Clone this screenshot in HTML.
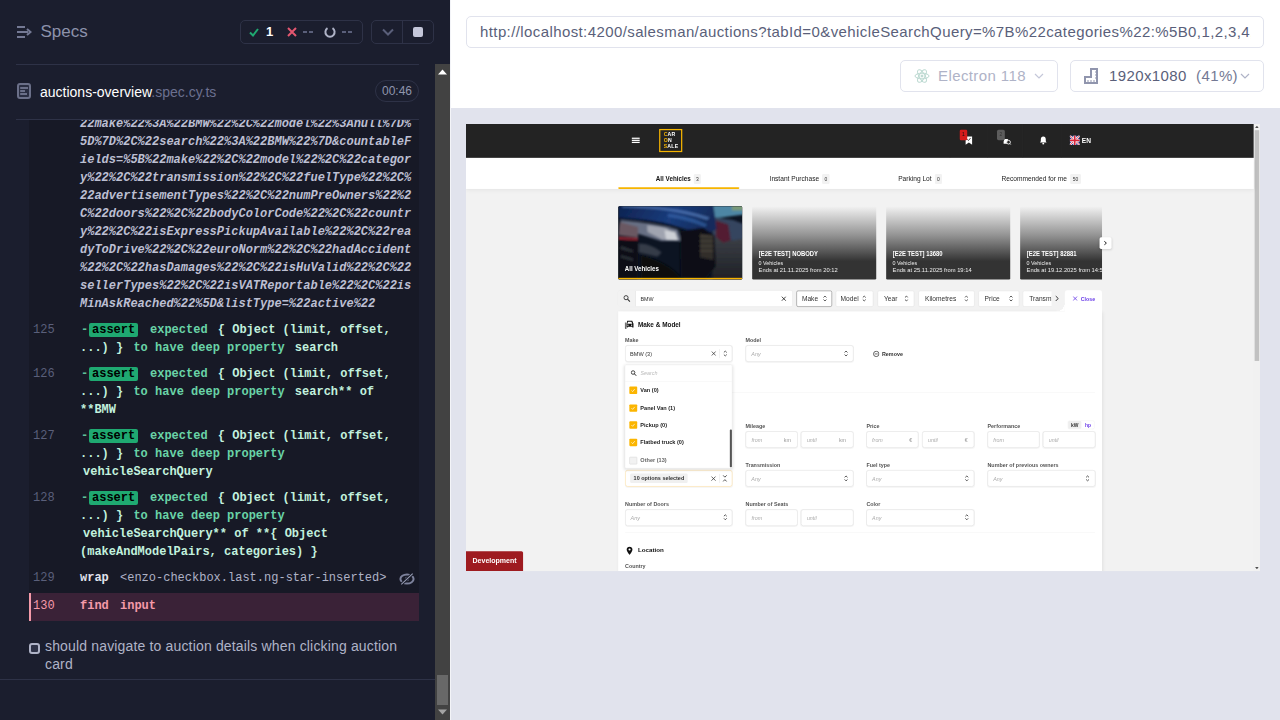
<!DOCTYPE html>
<html><head><meta charset="utf-8">
<style>
*{box-sizing:border-box;margin:0;padding:0}
html,body{width:1280px;height:720px;overflow:hidden;background:#e1e3ed;font-family:"Liberation Sans",sans-serif}
.a{position:absolute}
#rep{left:0;top:0;width:450px;height:720px;background:#1b1e2e;overflow:hidden}
.hl{height:1px;background:#2e3247}
.mono{font-family:"Liberation Mono",monospace;font-size:12px;line-height:18px;white-space:pre}
.num{color:#5a5f7a;font-weight:normal}
.url{color:#bcbfd2;font-weight:bold;font-style:italic}
.g{color:#69d3a7;font-weight:bold}
.w{color:#c2f1de;font-weight:bold}
.badge{background:#1fa971;color:#000;font-weight:bold;border-radius:3px}
</style></head><body>
<div id="rep" class="a">
  <!-- header -->
  <svg class="a" style="left:17px;top:26px" width="15" height="13" viewBox="0 0 15 13">
    <path d="M0 1h8M0 6h11M0 11h8" stroke="#747994" stroke-width="2"/>
    <path d="M10 3l3.5 3L10 9" stroke="#747994" stroke-width="2" fill="none"/>
  </svg>
  <div class="a" style="left:40.5px;top:20.5px;font-size:17px;line-height:22px;color:#8d92ab">Specs</div>
  <div class="a" style="left:240px;top:20px;width:123px;height:24px;border:1px solid #2e3247;border-radius:5px"></div>
  <svg class="a" style="left:249px;top:28px" width="10" height="9" viewBox="0 0 10 9"><path d="M1 4.5l3 3L9 1" stroke="#1fa971" stroke-width="2" fill="none"/></svg>
  <div class="a" style="left:266px;top:24px;font-size:13px;line-height:16px;font-weight:bold;color:#fff">1</div>
  <svg class="a" style="left:287px;top:27px" width="10" height="10" viewBox="0 0 10 10"><path d="M1 1l8 8M9 1l-8 8" stroke="#e45770" stroke-width="2"/></svg>
  <div class="a" style="left:303px;top:31px;width:10px;height:2px;border-left:4px solid #5a5f7a;border-right:4px solid #5a5f7a"></div>
  <svg class="a" style="left:324px;top:26px" width="12" height="12" viewBox="0 0 12 12"><path d="M3.5 2.2A4.6 4.6 0 1 0 8.5 2.2" stroke="#afb3c7" stroke-width="2" fill="none"/></svg>
  <div class="a" style="left:342px;top:31px;width:10px;height:2px;border-left:4px solid #5a5f7a;border-right:4px solid #5a5f7a"></div>
  <div class="a" style="left:371px;top:20px;width:63px;height:24px;border:1px solid #2e3247;border-radius:5px"></div>
  <div class="a" style="left:402px;top:20px;width:1px;height:24px;background:#2e3247"></div>
  <svg class="a" style="left:382px;top:28px" width="12" height="8" viewBox="0 0 12 8"><path d="M1 1.5l5 5 5-5" stroke="#5a5f7a" stroke-width="2" fill="none"/></svg>
  <div class="a" style="left:413px;top:27px;width:10px;height:10px;background:#c4c7d9;border-radius:2px"></div>
  <div class="a hl" style="left:16px;top:64px;width:403px"></div>
  <!-- spec row -->
  <svg class="a" style="left:17px;top:83px" width="14" height="16" viewBox="0 0 14 16"><rect x="1" y="1" width="12" height="14" rx="2" fill="#2a2e42" stroke="#6b7089" stroke-width="2"/><path d="M3.2 5h7.8M3.2 8h4.8M3.2 11h6.8" stroke="#6b7089" stroke-width="1.8"/></svg>
  <div class="a" style="left:40px;top:84px;font-size:14px;line-height:16px;color:#fff;white-space:pre">auctions-overview<span style="color:#6b7090">.spec.cy.ts</span></div>
  <div class="a" style="left:375px;top:80px;width:44px;height:22px;border:1px solid #2e3247;border-radius:11px"></div>
  <div class="a" style="left:382px;top:84px;font-size:12px;line-height:14px;color:#9095ad">00:46</div>
  <div class="a hl" style="left:16px;top:119px;width:403px"></div>

  <!-- command log -->
  <div class="a" style="left:29px;top:120px;width:390px;height:501px;background:#171926;overflow:hidden">
    <div class="a mono url" style="left:51px;top:-5px">22make%22%3A%22BMW%22%2C%22model%22%3Anull%7D%
5D%7D%2C%22search%22%3A%22BMW%22%7D&amp;countableF
ields=%5B%22make%22%2C%22model%22%2C%22categor
y%22%2C%22transmission%22%2C%22fuelType%22%2C%
22advertisementTypes%22%2C%22numPreOwners%22%2
C%22doors%22%2C%22bodyColorCode%22%2C%22countr
y%22%2C%22isExpressPickupAvailable%22%2C%22rea
dyToDrive%22%2C%22euroNorm%22%2C%22hadAccident
%22%2C%22hasDamages%22%2C%22isHuValid%22%2C%22
sellerTypes%22%2C%22isVATReportable%22%2C%22is
MinAskReached%22%5D&amp;listType=%22active%22</div>
<div class="a mono" style="left:4px;top:201px;color:#5a5f7a">125</div><div class="a mono g" style="left:52px;top:201px;color:#5fbf97">-</div><div class="a" style="left:60px;top:203px;width:49px;height:14px;background:#1fa971;border-radius:2px"></div><div class="a mono" style="left:63px;top:201px;color:#000;font-weight:bold">assert</div><div class="a mono" style="left:121px;top:201px"><span class="g">expected</span> <span class="w" style="padding-left:3px">{ Object (limit, offset,</span></div><div class="a mono" style="left:51px;top:219px"><span class="w">...) }</span> <span class="g" style="padding-left:3px">to have deep property</span> <span class="w" style="padding-left:3px">search</span></div><div class="a mono" style="left:4px;top:245px;color:#5a5f7a">126</div><div class="a mono g" style="left:52px;top:245px;color:#5fbf97">-</div><div class="a" style="left:60px;top:247px;width:49px;height:14px;background:#1fa971;border-radius:2px"></div><div class="a mono" style="left:63px;top:245px;color:#000;font-weight:bold">assert</div><div class="a mono" style="left:121px;top:245px"><span class="g">expected</span> <span class="w" style="padding-left:3px">{ Object (limit, offset,</span></div><div class="a mono" style="left:51px;top:263px"><span class="w">...) }</span> <span class="g" style="padding-left:3px">to have deep property</span> <span class="w" style="padding-left:3px">search** of</span></div><div class="a mono" style="left:51px;top:281px"><span class="w">**BMW</span></div><div class="a mono" style="left:4px;top:307px;color:#5a5f7a">127</div><div class="a mono g" style="left:52px;top:307px;color:#5fbf97">-</div><div class="a" style="left:60px;top:309px;width:49px;height:14px;background:#1fa971;border-radius:2px"></div><div class="a mono" style="left:63px;top:307px;color:#000;font-weight:bold">assert</div><div class="a mono" style="left:121px;top:307px"><span class="g">expected</span> <span class="w" style="padding-left:3px">{ Object (limit, offset,</span></div><div class="a mono" style="left:51px;top:325px"><span class="w">...) }</span> <span class="g" style="padding-left:3px">to have deep property</span></div><div class="a mono" style="left:54px;top:343px"><span class="w">vehicleSearchQuery</span></div><div class="a mono" style="left:4px;top:369px;color:#5a5f7a">128</div><div class="a mono g" style="left:52px;top:369px;color:#5fbf97">-</div><div class="a" style="left:60px;top:371px;width:49px;height:14px;background:#1fa971;border-radius:2px"></div><div class="a mono" style="left:63px;top:369px;color:#000;font-weight:bold">assert</div><div class="a mono" style="left:121px;top:369px"><span class="g">expected</span> <span class="w" style="padding-left:3px">{ Object (limit, offset,</span></div><div class="a mono" style="left:51px;top:387px"><span class="w">...) }</span> <span class="g" style="padding-left:3px">to have deep property</span></div><div class="a mono" style="left:54px;top:405px"><span class="w">vehicleSearchQuery** of **{ Object</span></div><div class="a mono" style="left:51px;top:423px"><span class="w">(makeAndModelPairs, categories) }</span></div><div class="a mono" style="left:4px;top:449px;color:#5a5f7a">129</div><div class="a mono" style="left:51px;top:449px"><span style="color:#e1e3ed;font-weight:bold">wrap</span></div><div class="a mono" style="left:91px;top:449px"><span style="color:#afb3c7">&lt;enzo-checkbox.last.ng-star-inserted&gt;</span></div><svg class="a" style="left:370px;top:453px" width="16" height="12" viewBox="0 0 16 12"><ellipse cx="8" cy="6" rx="6.6" ry="4.6" fill="none" stroke="#7d829c" stroke-width="2"/><circle cx="8" cy="6" r="2.2" fill="#5f647e"/><path d="M2.3 11.3L13.7 0.7" stroke="#171926" stroke-width="3"/><path d="M2.3 11.3L13.7 0.7" stroke="#9a9fb6" stroke-width="1.1"/></svg><div class="a" style="left:0px;top:473px;width:390px;height:28px;background:#3a2237;border-left:2px solid #f59aa9"></div><div class="a mono" style="left:4px;top:477px;color:#f59aa9">130</div><div class="a mono" style="left:51px;top:477px"><span style="color:#f59aa9;font-weight:bold">find</span></div><div class="a mono" style="left:91px;top:477px"><span style="color:#f59aa9;font-weight:bold">input</span></div>
  </div>
  
  <div class="a" style="left:29px;top:643px;width:10.5px;height:10.5px;border:2px solid #afb3c7;border-radius:3px;background:#2e3247"></div>
  <div class="a" style="left:45px;top:637px;width:380px;font-size:14px;line-height:18px;letter-spacing:0.16px;color:#afb3c7">should navigate to auction details when clicking auction<br>card</div>
  <div class="a hl" style="left:0px;top:679px;width:435px"></div>
<div class="a" style="left:435px;top:64px;width:15px;height:656px;background:#424242"></div>
  <div class="a" style="left:437px;top:675px;width:11px;height:30px;background:#686868"></div>
  <svg class="a" style="left:438px;top:69px" width="9" height="6" viewBox="0 0 9 6"><path d="M0 5.5L4.5 0.5 9 5.5z" fill="#fff"/></svg>
  <svg class="a" style="left:438px;top:709px" width="9" height="6" viewBox="0 0 9 6"><path d="M0 0.5L4.5 5.5 9 0.5z" fill="#a3a3a3"/></svg>
</div>

<!--APP--><div id="app" class="a" style="left:466px;top:124px;width:1920px;height:1081px;transform:scale(0.413542);transform-origin:0 0;background:#f2f2f2;overflow:hidden">
 <div class="a" style="left:0;top:0;width:1905px;height:82px;background:#232323"></div>
 <!-- hamburger -->
 <div class="a" style="left:401px;top:33px;width:19px;height:3px;background:#fff"></div>
 <div class="a" style="left:401px;top:38px;width:19px;height:3px;background:#fff"></div>
 <div class="a" style="left:401px;top:43px;width:19px;height:3px;background:#fff"></div>
 <!-- logo -->
 <div class="a" style="left:467px;top:12px;width:56px;height:56px;border:3px solid #f5b400"></div>
 <div class="a" style="left:478px;top:19px;font:bold 12.5px/14px 'Liberation Sans',sans-serif;color:#fff;letter-spacing:0.5px"><span style="color:#f5b400">C</span>AR<br><span style="color:#f5b400">O</span>N<br><span style="color:#f5b400">S</span>ALE</div>
 <!-- header icons -->
 <div class="a" style="left:1170px;top:0;width:1px;height:82px;background:#292929"></div>
 <div class="a" style="left:1260px;top:0;width:1px;height:82px;background:#292929"></div>
 <div class="a" style="left:1346px;top:0;width:1px;height:82px;background:#292929"></div>
 <div class="a" style="left:1439px;top:0;width:1px;height:82px;background:#292929"></div>
 <svg class="a" style="left:1207px;top:29px" width="18" height="22" viewBox="0 0 18 22"><path d="M1 1h16v20l-8-5-8 5z" fill="#fff"/><path d="M5 8l3 3 5-6" stroke="#232323" stroke-width="2" fill="none"/></svg>
 <div class="a" style="left:1194px;top:14px;width:18px;height:25px;background:#d41c1c;border-radius:3px;color:#111;font:12px/25px 'Liberation Sans',sans-serif;text-align:center">1</div>
 <svg class="a" style="left:1298px;top:29px" width="21" height="22" viewBox="0 0 21 22"><path d="M2 14l2-7h8l2 7v5H2z" fill="#fff"/><circle cx="14" cy="15" r="4.5" fill="#232323" stroke="#fff" stroke-width="2"/><path d="M17 18l3 3" stroke="#fff" stroke-width="2"/></svg>
 <div class="a" style="left:1284px;top:14px;width:19px;height:25px;background:#5c5c5c;border-radius:4px;color:#333;font:12px/25px 'Liberation Sans',sans-serif;text-align:center">2</div>
 <svg class="a" style="left:1387px;top:29px" width="18" height="21" viewBox="0 0 18 21"><path d="M9 1c-4 0-6 3-6 7v5l-2 3h16l-2-3V8c0-4-2-7-6-7z" fill="#fff"/><circle cx="9" cy="18.5" r="2.3" fill="#fff"/></svg>
 <svg class="a" style="left:1460px;top:28px" width="24" height="23" viewBox="0 0 24 23"><rect width="24" height="23" fill="#2a3f9a"/><path d="M0 0L24 23M24 0L0 23" stroke="#fff" stroke-width="5"/><path d="M0 0L24 23M24 0L0 23" stroke="#d8233a" stroke-width="2"/><path d="M12 0v23M0 11.5h24" stroke="#fff" stroke-width="7"/><path d="M12 0v23M0 11.5h24" stroke="#d8233a" stroke-width="4"/></svg>
 <div class="a" style="left:1489px;top:31px;font:bold 16px/18px 'Liberation Sans',sans-serif;color:#fff">EN</div>
 <div class="a" style="left:1905px;top:0;width:15px;height:1081px;background:#f1f1f1"></div>
<div class="a" style="left:1907px;top:15px;width:11px;height:558px;background:#c1c1c1"></div>
<svg class="a" style="left:1908px;top:4px" width="9" height="6" viewBox="0 0 9 6"><path d="M0 5.5L4.5 0.5 9 5.5z" fill="#505050"/></svg>
<svg class="a" style="left:1908px;top:1071px" width="9" height="6" viewBox="0 0 9 6"><path d="M0 0.5L4.5 5.5 9 0.5z" fill="#505050"/></svg>
<div class="a" style="left:367.5px;top:190px;width:1170px;height:195px;overflow:hidden">
<div class="a" style="left:0;top:8.8px;width:300px;height:177px;border-radius:3px;overflow:hidden;background:#0b1119">
<svg class="a" style="left:0;top:0" width="300" height="177" viewBox="0 0 300 177">
 <defs>
  <filter id="bl" x="-10%" y="-10%" width="120%" height="120%"><feGaussianBlur stdDeviation="2"/></filter>
  <linearGradient id="road" x1="0" y1="0" x2="0" y2="1"><stop offset="0" stop-color="#3c4048"/><stop offset="1" stop-color="#1e2024"/></linearGradient>
  <linearGradient id="hood" x1="0" y1="0" x2="1" y2="0.2"><stop offset="0" stop-color="#0e2250"/><stop offset="0.6" stop-color="#1a3c7c"/><stop offset="1" stop-color="#142c5c"/></linearGradient>
 </defs>
 <rect width="300" height="177" fill="#0c1422"/>
 <g filter="url(#bl)">
  <rect x="228" y="70" width="80" height="110" fill="url(#road)"/>
  <path d="M225 -5h80v25l-80 10z" fill="#4e86a4"/>
  <path d="M275 -5h30v15h-30z" fill="#7a9a78"/>
  <path d="M228 25l50 8 25 10v35l-25 5-50-8z" fill="#34445e"/>
  <path d="M236 34l30 10 6 38-18 6-18-14z" fill="#521e30"/>
  <path d="M0 -5h230l8 60-20 10-50-8-60-18L0 30z" fill="url(#hood)"/>
  <path d="M10 3c70 0 140 8 205 30l6-6C150 4 80 -2 10 -2z" fill="#5c86c4" opacity="0.65"/>
  <path d="M120 18c40 4 70 14 95 26l-5 6c-30-12-60-20-90-24z" fill="#3a6ab0" opacity="0.6"/>
  <path d="M0 26c40 2 90 8 130 18l-6 6C90 36 40 32 0 32z" fill="#081838" opacity="0.9"/>
  <path d="M6 34c50 4 100 12 138 22l8 28-48 0-58-18-44-12z" fill="#687084"/>
  <path d="M70 46l45 6 26 18 4 12-38-2-36-18z" fill="#a0a4b0"/>
  <path d="M112 58l26 4 6 20-28-2z" fill="#cdd0d6"/>
  <path d="M4 38l44 12 0 26-48-6z" fill="#6a5862"/>
  <path d="M0 74l48 3 0 4-48-2z" fill="#b82636"/>
  <path d="M0 81l48 2v95H0z" fill="#0a0e14"/>
  <path d="M6 96l30 10v6l-30-8zM6 118l30 8v6l-30-8z" fill="#3a4048" opacity="0.7"/>
  <path d="M50 90c20 0 40 8 55 22l-10 10-45-10z" fill="#565c68" opacity="0.55"/>
  <path d="M150 60l55-8 28 18 3 75-25 32-60-5z" fill="#090d15"/>
  <path d="M198 66l32 6v58l-32-6z" fill="#38342f" opacity="0.85"/>
  <path d="M198 72h32M198 84h32M198 96h32M198 108h32" stroke="#6e6656" stroke-width="2" opacity="0.7"/>
  <path d="M55 118c40 10 80 30 100 59H55z" fill="#070a10"/>
 </g>
</svg>
<div class="a" style="left:0;top:173px;width:300px;height:4px;background:#f7b500"></div>
<div class="a" style="left:16.5px;top:140px;font:bold 19px/22px 'Liberation Sans',sans-serif;color:#fff;transform:scaleX(0.78);transform-origin:0 0;white-space:nowrap">All Vehicles</div>
</div>
<div class="a" style="left:324px;top:8.8px;width:300px;height:177px;border-radius:3px;overflow:hidden;background:linear-gradient(to bottom,rgba(51,51,51,0) 0%,rgba(51,51,51,0.5) 40%,#333 75%)">
<div class="a" style="left:16px;top:103.3px;font:bold 19px/22px 'Liberation Sans',sans-serif;color:#fff;white-space:nowrap;transform:scaleX(0.75);transform-origin:0 0">[E2E TEST] NOBODY</div>
<div class="a" style="left:16px;top:129.5px;font:13px/16px 'Liberation Sans',sans-serif;color:#eee;white-space:nowrap">0 Vehicles</div>
<div class="a" style="left:16px;top:145.3px;font:14px/17px 'Liberation Sans',sans-serif;color:#eee;white-space:nowrap">Ends at 21.11.2025 from 20:12</div>
</div>
<div class="a" style="left:648px;top:8.8px;width:300px;height:177px;border-radius:3px;overflow:hidden;background:linear-gradient(to bottom,rgba(51,51,51,0) 0%,rgba(51,51,51,0.5) 40%,#333 75%)">
<div class="a" style="left:16px;top:103.3px;font:bold 19px/22px 'Liberation Sans',sans-serif;color:#fff;white-space:nowrap;transform:scaleX(0.75);transform-origin:0 0">[E2E TEST] 13680</div>
<div class="a" style="left:16px;top:129.5px;font:13px/16px 'Liberation Sans',sans-serif;color:#eee;white-space:nowrap">0 Vehicles</div>
<div class="a" style="left:16px;top:145.3px;font:14px/17px 'Liberation Sans',sans-serif;color:#eee;white-space:nowrap">Ends at 25.11.2025 from 19:14</div>
</div>
<div class="a" style="left:972px;top:8.8px;width:300px;height:177px;border-radius:3px;overflow:hidden;background:linear-gradient(to bottom,rgba(51,51,51,0) 0%,rgba(51,51,51,0.5) 40%,#333 75%)">
<div class="a" style="left:16px;top:103.3px;font:bold 19px/22px 'Liberation Sans',sans-serif;color:#fff;white-space:nowrap;transform:scaleX(0.75);transform-origin:0 0">[E2E TEST] 82881</div>
<div class="a" style="left:16px;top:129.5px;font:13px/16px 'Liberation Sans',sans-serif;color:#eee;white-space:nowrap">0 Vehicles</div>
<div class="a" style="left:16px;top:145.3px;font:14px/17px 'Liberation Sans',sans-serif;color:#eee;white-space:nowrap">Ends at 19.12.2025 from 14:53</div>
</div>
</div>
<div class="a" style="left:1532px;top:274px;width:29px;height:28px;background:#fff;border-radius:4px;box-shadow:0 2px 6px rgba(0,0,0,0.15)"></div>
<svg class="a" style="left:1541px;top:282px" width="10" height="12" viewBox="0 0 10 12"><path d="M2.5 1.5l5 4.5-5 4.5" stroke="#222" stroke-width="2.4" fill="none"/></svg>
<div class="a" style="left:367.5px;top:401.5px;width:422px;height:40.5px;border:1px solid #e3e3e3;border-radius:4px;background:#fff;overflow:hidden"><div class="a" style="left:0;top:0;width:42px;height:40px;background:#f2f2f2;border-right:1px solid #e3e3e3"></div></div>
<svg class="a" style="left:380px;top:413px" width="18" height="18" viewBox="0 0 18 18"><circle cx="7" cy="7" r="5" stroke="#333" stroke-width="2.2" fill="none"/><path d="M10.5 10.5l6 6" stroke="#333" stroke-width="2.6"/></svg>
<div class="a" style="left:422px;top:415px;font:13px/18px 'Liberation Sans',sans-serif;color:#333">BMW</div>
<svg class="a" style="left:762px;top:416px" width="13" height="13" viewBox="0 0 13 13"><path d="M1.5 1.5l10 10M11.5 1.5l-10 10" stroke="#222" stroke-width="2"/></svg>
<div class="a" style="left:798.6px;top:402.5px;width:86px;height:39px;border:1px solid #555;border-radius:4px;background:#fff"></div>
<div class="a" style="left:812.3px;top:412px;font:16px/20px 'Liberation Sans',sans-serif;color:#333;white-space:nowrap">Make</div>
<svg class="a" style="left:862.7px;top:414px" width="10" height="16" viewBox="0 0 10 16"><path d="M1.5 5.5L5 2l3.5 3.5M1.5 10.5L5 14l3.5-3.5" stroke="#333" stroke-width="2" fill="none"/></svg>
<div class="a" style="left:893.7px;top:402.5px;width:91px;height:39px;border:1px solid #d9d9d9;border-radius:4px;background:#fff"></div>
<div class="a" style="left:905.8px;top:412px;font:16px/20px 'Liberation Sans',sans-serif;color:#333;white-space:nowrap">Model</div>
<svg class="a" style="left:958px;top:414px" width="10" height="16" viewBox="0 0 10 16"><path d="M1.5 5.5L5 2l3.5 3.5M1.5 10.5L5 14l3.5-3.5" stroke="#333" stroke-width="2" fill="none"/></svg>
<div class="a" style="left:995px;top:402.5px;width:89px;height:39px;border:1px solid #d9d9d9;border-radius:4px;background:#fff"></div>
<div class="a" style="left:1010.8px;top:412px;font:16px/20px 'Liberation Sans',sans-serif;color:#333;white-space:nowrap">Year</div>
<svg class="a" style="left:1060px;top:414px" width="10" height="16" viewBox="0 0 10 16"><path d="M1.5 5.5L5 2l3.5 3.5M1.5 10.5L5 14l3.5-3.5" stroke="#333" stroke-width="2" fill="none"/></svg>
<div class="a" style="left:1093.5px;top:402.5px;width:136px;height:39px;border:1px solid #d9d9d9;border-radius:4px;background:#fff"></div>
<div class="a" style="left:1109.9px;top:412px;font:16px/20px 'Liberation Sans',sans-serif;color:#333;white-space:nowrap">Kilometres</div>
<svg class="a" style="left:1205px;top:414px" width="10" height="16" viewBox="0 0 10 16"><path d="M1.5 5.5L5 2l3.5 3.5M1.5 10.5L5 14l3.5-3.5" stroke="#333" stroke-width="2" fill="none"/></svg>
<div class="a" style="left:1238.6px;top:402.5px;width:99px;height:39px;border:1px solid #d9d9d9;border-radius:4px;background:#fff"></div>
<div class="a" style="left:1254px;top:412px;font:16px/20px 'Liberation Sans',sans-serif;color:#333;white-space:nowrap">Price</div>
<svg class="a" style="left:1313px;top:414px" width="10" height="16" viewBox="0 0 10 16"><path d="M1.5 5.5L5 2l3.5 3.5M1.5 10.5L5 14l3.5-3.5" stroke="#333" stroke-width="2" fill="none"/></svg>
<div class="a" style="left:1346px;top:402.5px;width:70px;height:39px;overflow:hidden"><div class="a" style="left:0;top:0;width:100px;height:39px;border:1px solid #d9d9d9;border-radius:4px;background:#fff"></div><div class="a" style="left:16px;top:9.5px;font:16px/20px 'Liberation Sans',sans-serif;color:#333;white-space:nowrap">Transmission</div></div>
<svg class="a" style="left:1424px;top:414px" width="10" height="16" viewBox="0 0 10 16"><path d="M2 2l6 6-6 6" stroke="#222" stroke-width="2.2" fill="none"/></svg>
<div class="a" style="left:367.5px;top:453px;width:1170px;height:700px;background:#fff;box-shadow:2px 2px 8px rgba(0,0,0,0.07)"></div>
<div class="a" style="left:1448px;top:402px;width:89.5px;height:60px;background:#fff;border-radius:6px 6px 0 0"></div>
<div class="a" style="left:1428px;top:433px;width:20px;height:20px;background:radial-gradient(circle at 0 0,#f2f2f2 19.5px,#fff 20px)"></div>
<svg class="a" style="left:1467px;top:416px" width="12" height="12" viewBox="0 0 12 12"><path d="M1 1l10 10M11 1L1 11" stroke="#6a3de8" stroke-width="2"/></svg>
<div class="a" style="left:1486.5px;top:416px;font:bold 12.8px/16px 'Liberation Sans',sans-serif;color:#6a3de8">Close</div>
<svg class="a" style="left:384px;top:474px" width="23" height="22" viewBox="0 0 23 22"><path d="M6 2h12l3 7v9h-3v-2H7v2H4V9z" fill="#111"/><path d="M8 4h8l2 5H6z" fill="#fff"/><circle cx="7.5" cy="12.5" r="1.5" fill="#fff"/><circle cx="16.5" cy="12.5" r="1.5" fill="#fff"/><path d="M1 6v14h3" stroke="#111" stroke-width="2" fill="none"/></svg>
<div class="a" style="left:415.7px;top:475.6px;font:bold 15.5px/20px 'Liberation Sans',sans-serif;color:#111;white-space:nowrap">Make &amp; Model</div>
<div class="a" style="left:384.5px;top:514.5px;font:bold 13px/16px 'Liberation Sans',sans-serif;color:#555;white-space:nowrap">Make</div>
<div class="a" style="left:384.5px;top:535px;width:259.5px;height:40px;border:1px solid #d6d6d6;border-radius:6px;background:#fff;box-shadow:0 1px 2px rgba(0,0,0,0.04)"></div>
<div class="a" style="left:396.6px;top:548px;font:13.5px/18px 'Liberation Sans',sans-serif;color:#333">BMW (3)</div>
<svg class="a" style="left:593px;top:549px" width="12" height="12" viewBox="0 0 12 12"><path d="M1 1l10 10M11 1L1 11" stroke="#333" stroke-width="1.8"/></svg>
<div class="a" style="left:612.5px;top:544px;width:1.5px;height:22px;background:#ddd"></div>
<svg class="a" style="left:621.5px;top:547px" width="10" height="16" viewBox="0 0 10 16"><path d="M1.5 5.5L5 2l3.5 3.5M1.5 10.5L5 14l3.5-3.5" stroke="#333" stroke-width="2" fill="none"/></svg>
<div class="a" style="left:676px;top:514.5px;font:bold 13px/16px 'Liberation Sans',sans-serif;color:#555;white-space:nowrap">Model</div>
<div class="a" style="left:676px;top:535px;width:261px;height:40px;border:1px solid #d6d6d6;border-radius:6px;background:#fff;box-shadow:0 1px 2px rgba(0,0,0,0.04)"></div>
<div class="a" style="left:690px;top:548px;font:italic 13px/18px 'Liberation Sans',sans-serif;color:#aaa;white-space:nowrap">Any</div>
<svg class="a" style="left:914px;top:547px" width="10" height="16" viewBox="0 0 10 16"><path d="M1.5 5.5L5 2l3.5 3.5M1.5 10.5L5 14l3.5-3.5" stroke="#333" stroke-width="2" fill="none"/></svg>
<svg class="a" style="left:984px;top:548px" width="16" height="16" viewBox="0 0 16 16"><circle cx="8" cy="8" r="6.5" stroke="#333" stroke-width="1.8" fill="none"/><path d="M4.5 8h7" stroke="#333" stroke-width="1.8"/></svg>
<div class="a" style="left:1005.9px;top:549px;font:bold 13px/16px 'Liberation Sans',sans-serif;color:#333">Remove</div>
<div class="a" style="left:384.5px;top:649px;width:1136px;height:1px;background:#f0f0f0"></div>
<div class="a" style="left:676px;top:721.9px;font:bold 13px/16px 'Liberation Sans',sans-serif;color:#555;white-space:nowrap">Mileage</div>
<div class="a" style="left:676px;top:742.5px;width:126px;height:40px;border:1px solid #d6d6d6;border-radius:6px;background:#fff;box-shadow:0 1px 2px rgba(0,0,0,0.04)"></div>
<div class="a" style="left:810px;top:742.5px;width:127px;height:40px;border:1px solid #d6d6d6;border-radius:6px;background:#fff;box-shadow:0 1px 2px rgba(0,0,0,0.04)"></div>
<div class="a" style="left:690.6px;top:755.5px;font:italic 13px/18px 'Liberation Sans',sans-serif;color:#aaa;white-space:nowrap">from</div>
<div class="a" style="left:768.5px;top:755.5px;font:13px/18px 'Liberation Sans',sans-serif;color:#999;white-space:nowrap">km</div>
<div class="a" style="left:824.3px;top:755.5px;font:italic 13px/18px 'Liberation Sans',sans-serif;color:#aaa;white-space:nowrap">until</div>
<div class="a" style="left:901.7px;top:755.5px;font:13px/18px 'Liberation Sans',sans-serif;color:#999;white-space:nowrap">km</div>
<div class="a" style="left:968.2px;top:721.9px;font:bold 13px/16px 'Liberation Sans',sans-serif;color:#555;white-space:nowrap">Price</div>
<div class="a" style="left:968.2px;top:742.5px;width:126px;height:40px;border:1px solid #d6d6d6;border-radius:6px;background:#fff;box-shadow:0 1px 2px rgba(0,0,0,0.04)"></div>
<div class="a" style="left:1102.9px;top:742.5px;width:126.5px;height:40px;border:1px solid #d6d6d6;border-radius:6px;background:#fff;box-shadow:0 1px 2px rgba(0,0,0,0.04)"></div>
<div class="a" style="left:982px;top:755.5px;font:italic 13px/18px 'Liberation Sans',sans-serif;color:#aaa;white-space:nowrap">from</div>
<div class="a" style="left:1072px;top:755.5px;font:13px/18px 'Liberation Sans',sans-serif;color:#999;white-space:nowrap">€</div>
<div class="a" style="left:1117px;top:755.5px;font:italic 13px/18px 'Liberation Sans',sans-serif;color:#aaa;white-space:nowrap">until</div>
<div class="a" style="left:1206px;top:755.5px;font:13px/18px 'Liberation Sans',sans-serif;color:#999;white-space:nowrap">€</div>
<div class="a" style="left:1261px;top:721.9px;font:bold 13px/16px 'Liberation Sans',sans-serif;color:#555;white-space:nowrap">Performance</div>
<div class="a" style="left:1261px;top:742.5px;width:125.5px;height:40px;border:1px solid #d6d6d6;border-radius:6px;background:#fff;box-shadow:0 1px 2px rgba(0,0,0,0.04)"></div>
<div class="a" style="left:1395.3px;top:742.5px;width:126.5px;height:40px;border:1px solid #d6d6d6;border-radius:6px;background:#fff;box-shadow:0 1px 2px rgba(0,0,0,0.04)"></div>
<div class="a" style="left:1275px;top:755.5px;font:italic 13px/18px 'Liberation Sans',sans-serif;color:#aaa;white-space:nowrap">from</div>
<div class="a" style="left:1409px;top:755.5px;font:italic 13px/18px 'Liberation Sans',sans-serif;color:#aaa;white-space:nowrap">until</div>
<div class="a" style="left:1455px;top:717px;width:65px;height:21px;border-radius:4px;background:#fff;border:1px solid #eee"></div>
<div class="a" style="left:1456px;top:718px;width:32px;height:19px;border-radius:3px;background:#eee;padding-top:2px;font:bold 12px/19px 'Liberation Sans',sans-serif;color:#333;text-align:center">kW</div>
<div class="a" style="left:1490px;top:720px;width:28px;height:19px;font:bold 12px/19px 'Liberation Sans',sans-serif;color:#6a3de8;text-align:center">hp</div>
<div class="a" style="left:676px;top:816.5px;font:bold 13px/16px 'Liberation Sans',sans-serif;color:#555;white-space:nowrap">Transmission</div>
<div class="a" style="left:676px;top:837px;width:261px;height:40px;border:1px solid #d6d6d6;border-radius:6px;background:#fff;box-shadow:0 1px 2px rgba(0,0,0,0.04)"></div>
<div class="a" style="left:690px;top:850px;font:italic 13px/18px 'Liberation Sans',sans-serif;color:#aaa;white-space:nowrap">Any</div>
<svg class="a" style="left:913.5px;top:849px" width="10" height="16" viewBox="0 0 10 16"><path d="M1.5 5.5L5 2l3.5 3.5M1.5 10.5L5 14l3.5-3.5" stroke="#333" stroke-width="2" fill="none"/></svg>
<div class="a" style="left:968.2px;top:816.5px;font:bold 13px/16px 'Liberation Sans',sans-serif;color:#555;white-space:nowrap">Fuel type</div>
<div class="a" style="left:968.2px;top:837px;width:261px;height:40px;border:1px solid #d6d6d6;border-radius:6px;background:#fff;box-shadow:0 1px 2px rgba(0,0,0,0.04)"></div>
<div class="a" style="left:982px;top:850px;font:italic 13px/18px 'Liberation Sans',sans-serif;color:#aaa;white-space:nowrap">Any</div>
<svg class="a" style="left:1205.5px;top:849px" width="10" height="16" viewBox="0 0 10 16"><path d="M1.5 5.5L5 2l3.5 3.5M1.5 10.5L5 14l3.5-3.5" stroke="#333" stroke-width="2" fill="none"/></svg>
<div class="a" style="left:1261px;top:816.5px;font:bold 13px/16px 'Liberation Sans',sans-serif;color:#555;white-space:nowrap">Number of previous owners</div>
<div class="a" style="left:1261px;top:837px;width:261px;height:40px;border:1px solid #d6d6d6;border-radius:6px;background:#fff;box-shadow:0 1px 2px rgba(0,0,0,0.04)"></div>
<div class="a" style="left:1275px;top:850px;font:italic 13px/18px 'Liberation Sans',sans-serif;color:#aaa;white-space:nowrap">Any</div>
<svg class="a" style="left:1498px;top:849px" width="10" height="16" viewBox="0 0 10 16"><path d="M1.5 5.5L5 2l3.5 3.5M1.5 10.5L5 14l3.5-3.5" stroke="#333" stroke-width="2" fill="none"/></svg>
<div class="a" style="left:384.5px;top:837px;width:259.5px;height:40px;border:1px solid #fcd27f;border-radius:6px;background:#fff;box-shadow:0 1px 2px rgba(0,0,0,0.04)"></div>
<div class="a" style="left:397.3px;top:845px;width:138.5px;height:23px;background:#f0f0f0;border-radius:3px"></div>
<div class="a" style="left:405.3px;top:848px;font:bold 13.2px/17px 'Liberation Sans',sans-serif;color:#333;white-space:nowrap">10 options selected</div>
<svg class="a" style="left:592px;top:851px" width="13" height="13" viewBox="0 0 13 13"><path d="M1.5 1.5l10 10M11.5 1.5l-10 10" stroke="#333" stroke-width="1.8"/></svg>
<div class="a" style="left:612.5px;top:846px;width:1.5px;height:22px;background:#ddd"></div>
<svg class="a" style="left:620px;top:848px" width="12" height="18" viewBox="0 0 12 18"><path d="M1.5 1.5L6 6l4.5-4.5M1.5 16.5L6 12l4.5 4.5" stroke="#333" stroke-width="2" fill="none"/></svg>
<div class="a" style="left:384.5px;top:911.0px;font:bold 13px/16px 'Liberation Sans',sans-serif;color:#555;white-space:nowrap">Number of Doors</div>
<div class="a" style="left:384.5px;top:931.5px;width:259.5px;height:40px;border:1px solid #d6d6d6;border-radius:6px;background:#fff;box-shadow:0 1px 2px rgba(0,0,0,0.04)"></div>
<div class="a" style="left:398px;top:944.5px;font:italic 13px/18px 'Liberation Sans',sans-serif;color:#aaa;white-space:nowrap">Any</div>
<svg class="a" style="left:621.5px;top:943px" width="10" height="16" viewBox="0 0 10 16"><path d="M1.5 5.5L5 2l3.5 3.5M1.5 10.5L5 14l3.5-3.5" stroke="#333" stroke-width="2" fill="none"/></svg>
<div class="a" style="left:676px;top:911.0px;font:bold 13px/16px 'Liberation Sans',sans-serif;color:#555;white-space:nowrap">Number of Seats</div>
<div class="a" style="left:676px;top:931.5px;width:126px;height:40px;border:1px solid #d6d6d6;border-radius:6px;background:#fff;box-shadow:0 1px 2px rgba(0,0,0,0.04)"></div>
<div class="a" style="left:810px;top:931.5px;width:127px;height:40px;border:1px solid #d6d6d6;border-radius:6px;background:#fff;box-shadow:0 1px 2px rgba(0,0,0,0.04)"></div>
<div class="a" style="left:690.6px;top:944.5px;font:italic 13px/18px 'Liberation Sans',sans-serif;color:#aaa;white-space:nowrap">from</div>
<div class="a" style="left:824.3px;top:944.5px;font:italic 13px/18px 'Liberation Sans',sans-serif;color:#aaa;white-space:nowrap">until</div>
<div class="a" style="left:968.2px;top:911.0px;font:bold 13px/16px 'Liberation Sans',sans-serif;color:#555;white-space:nowrap">Color</div>
<div class="a" style="left:968.2px;top:931.5px;width:261px;height:40px;border:1px solid #d6d6d6;border-radius:6px;background:#fff;box-shadow:0 1px 2px rgba(0,0,0,0.04)"></div>
<div class="a" style="left:982px;top:944.5px;font:italic 13px/18px 'Liberation Sans',sans-serif;color:#aaa;white-space:nowrap">Any</div>
<svg class="a" style="left:1205.5px;top:943px" width="10" height="16" viewBox="0 0 10 16"><path d="M1.5 5.5L5 2l3.5 3.5M1.5 10.5L5 14l3.5-3.5" stroke="#333" stroke-width="2" fill="none"/></svg>
<div class="a" style="left:384.5px;top:987px;width:1136px;height:1px;background:#f0f0f0"></div>
<svg class="a" style="left:387px;top:1021px" width="17" height="22" viewBox="0 0 17 22"><path d="M8.5 1C4.4 1 1.5 4 1.5 8c0 5 7 13 7 13s7-8 7-13c0-4-2.9-7-7-7z" fill="#111"/><circle cx="8.5" cy="8" r="2.6" fill="#fff"/></svg>
<div class="a" style="left:415.9px;top:1021px;font:bold 15px/20px 'Liberation Sans',sans-serif;color:#111">Location</div>
<div class="a" style="left:384.5px;top:1061.5px;font:bold 13px/16px 'Liberation Sans',sans-serif;color:#555;white-space:nowrap">Country</div>
<div class="a" style="left:384.2px;top:581.6px;width:260px;height:251px;background:#fff;border:1px solid #eee;border-radius:4px;box-shadow:0 2px 8px rgba(0,0,0,0.12)"></div>
<svg class="a" style="left:398px;top:595px" width="15" height="15" viewBox="0 0 15 15"><circle cx="6" cy="6" r="4.3" stroke="#222" stroke-width="2" fill="none"/><path d="M9 9l5 5" stroke="#222" stroke-width="2.4"/></svg>
<div class="a" style="left:422px;top:595px;font:italic 13px/18px 'Liberation Sans',sans-serif;color:#bbb">Search</div>
<div class="a" style="left:385px;top:623px;width:258px;height:1px;background:#eee"></div>
<div class="a" style="left:395px;top:635.2px;width:18.5px;height:18px;background:#fbb500;border-radius:2px"></div>
<svg class="a" style="left:397px;top:637.2px" width="14" height="14" viewBox="0 0 14 14"><path d="M3 7l3 3 5-6" stroke="#fff" stroke-width="1.6" fill="none"/></svg>
<div class="a" style="left:421.5px;top:635.2px;font:bold 13.5px/18px 'Liberation Sans',sans-serif;color:#222;white-space:nowrap">Van (0)</div>
<div class="a" style="left:395px;top:677.6px;width:18.5px;height:18px;background:#fbb500;border-radius:2px"></div>
<svg class="a" style="left:397px;top:679.6px" width="14" height="14" viewBox="0 0 14 14"><path d="M3 7l3 3 5-6" stroke="#fff" stroke-width="1.6" fill="none"/></svg>
<div class="a" style="left:421.5px;top:677.6px;font:bold 13.5px/18px 'Liberation Sans',sans-serif;color:#222;white-space:nowrap">Panel Van (1)</div>
<div class="a" style="left:395px;top:719.2px;width:18.5px;height:18px;background:#fbb500;border-radius:2px"></div>
<svg class="a" style="left:397px;top:721.2px" width="14" height="14" viewBox="0 0 14 14"><path d="M3 7l3 3 5-6" stroke="#fff" stroke-width="1.6" fill="none"/></svg>
<div class="a" style="left:421.5px;top:719.2px;font:bold 13.5px/18px 'Liberation Sans',sans-serif;color:#222;white-space:nowrap">Pickup (0)</div>
<div class="a" style="left:395px;top:760.5px;width:18.5px;height:18px;background:#fbb500;border-radius:2px"></div>
<svg class="a" style="left:397px;top:762.5px" width="14" height="14" viewBox="0 0 14 14"><path d="M3 7l3 3 5-6" stroke="#fff" stroke-width="1.6" fill="none"/></svg>
<div class="a" style="left:421.5px;top:760.5px;font:bold 13.5px/18px 'Liberation Sans',sans-serif;color:#222;white-space:nowrap">Flatbed truck (0)</div>
<div class="a" style="left:395px;top:805px;width:18.5px;height:18px;background:#f2f2f2;border:1.5px solid #d0d0d0;border-radius:2px"></div>
<div class="a" style="left:421.5px;top:805px;font:bold 13.5px/18px 'Liberation Sans',sans-serif;color:#666;white-space:nowrap">Other (13)</div>
<div class="a" style="left:638px;top:739px;width:4.5px;height:91px;background:#555;border-radius:2px"></div>
<div class="a" style="left:0;top:1033px;width:137.5px;height:48px;background:#9e1b20;border-radius:0 4px 0 0"></div>
<div class="a" style="left:15.7px;top:1045px;font:bold 17px/22px 'Liberation Sans',sans-serif;color:#fff">Development</div>
 <!-- tabs -->
 <div class="a" style="left:0;top:82px;width:1905px;height:75px;background:#fff;box-shadow:0 3px 12px rgba(0,0,0,0.08)"></div>
 <div class="a" style="left:367.5px;top:153px;width:293px;height:4px;background:#f7b500;border-radius:2px"></div>
 <div class="a" style="left:459px;top:122px;font:bold 15.2px/20px 'Liberation Sans',sans-serif;color:#111">All Vehicles</div>
 <div class="a" style="left:551px;top:121px;width:17px;height:24px;background:#f2f2f2;border-radius:3px;font:12px/24px 'Liberation Sans',sans-serif;color:#333;text-align:center">3</div>
 <div class="a" style="left:734px;top:122px;font:16px/20px 'Liberation Sans',sans-serif;color:#222">Instant Purchase</div>
 <div class="a" style="left:861px;top:121px;width:18px;height:24px;background:#f2f2f2;border-radius:3px;font:12px/24px 'Liberation Sans',sans-serif;color:#333;text-align:center">0</div>
 <div class="a" style="left:1045px;top:122px;font:16px/20px 'Liberation Sans',sans-serif;color:#222">Parking Lot</div>
 <div class="a" style="left:1134px;top:121px;width:17px;height:24px;background:#f2f2f2;border-radius:3px;font:12px/24px 'Liberation Sans',sans-serif;color:#333;text-align:center">0</div>
 <div class="a" style="left:1295px;top:122px;font:16px/20px 'Liberation Sans',sans-serif;color:#222">Recommended for me</div>
 <div class="a" style="left:1461px;top:121px;width:26px;height:24px;background:#f2f2f2;border-radius:3px;font:12px/24px 'Liberation Sans',sans-serif;color:#333;text-align:center">50</div>
</div>
<!--/APP-->
<!-- right header -->
<div class="a" style="left:450px;top:0;width:830px;height:108px;background:#fff"></div>
<div class="a" style="left:450px;top:0;width:1px;height:720px;background:#f3f4f8"></div>

<div class="a" style="left:466px;top:16px;width:798px;height:32px;border:1px solid #e1e3ed;border-radius:5px;background:#fff"></div>
<div class="a" style="left:480px;top:23px;width:771px;overflow:hidden;white-space:pre;font-size:15px;line-height:18px;letter-spacing:0.4px;color:#5a5f7a">http://localhost:4200/salesman/auctions?tabId=0&amp;vehicleSearchQuery=%7B%22categories%22:%5B0,1,2,3,4,5,6,7</div>
<div class="a" style="left:900px;top:60px;width:158px;height:32px;border:1px solid #e1e3ed;border-radius:5px"></div>
<svg class="a" style="left:914px;top:68px" width="16" height="16" viewBox="0 0 16 16" fill="none" stroke="#bcd9d1" stroke-width="1">
 <ellipse cx="8" cy="8" rx="7" ry="2.8"/><ellipse cx="8" cy="8" rx="7" ry="2.8" transform="rotate(60 8 8)"/><ellipse cx="8" cy="8" rx="7" ry="2.8" transform="rotate(120 8 8)"/><circle cx="8" cy="8" r="1" fill="#bcd9d1"/>
</svg>
<div class="a" style="left:938px;top:67px;font-size:15px;line-height:18px;letter-spacing:0.4px;color:#afb3c7;white-space:pre">Electron 118</div>
<svg class="a" style="left:1034px;top:73px" width="10" height="6" viewBox="0 0 10 6"><path d="M1 1l4 4 4-4" stroke="#c4c7d9" stroke-width="1.2" fill="none"/></svg>
<div class="a" style="left:1070px;top:60px;width:194px;height:32px;border:1px solid #e1e3ed;border-radius:5px"></div>
<svg class="a" style="left:1084px;top:68px" width="16" height="16" viewBox="0 0 16 16" fill="none" stroke="#9095ad" stroke-width="2">
 <path d="M1 15V9h6V1h6v14z"/><path d="M4 12v2M7 12v2M10 12v2M13 4h-2M13 7h-2M13 10h-2" stroke-width="1"/>
</svg>
<div class="a" style="left:1109px;top:67px;font-size:15px;line-height:18px;letter-spacing:0.4px;color:#5a5f7a;white-space:pre">1920x1080</div>
<div class="a" style="left:1196px;top:67px;font-size:15px;line-height:18px;letter-spacing:0.4px;color:#747994;white-space:pre">(41%)</div>
<svg class="a" style="left:1240px;top:73px" width="10" height="6" viewBox="0 0 10 6"><path d="M1 1l4 4 4-4" stroke="#afb3c7" stroke-width="1.2" fill="none"/></svg>
</body></html>
